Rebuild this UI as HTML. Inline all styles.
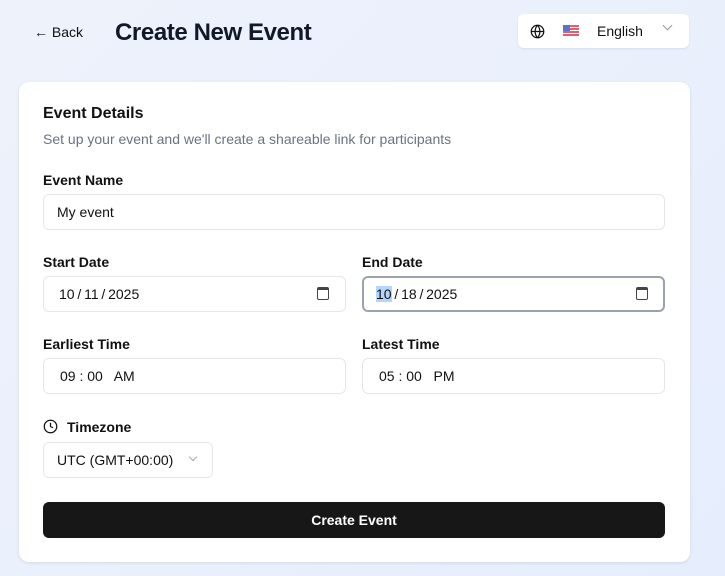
<!DOCTYPE html>
<html><head><style>
*{box-sizing:border-box;margin:0;padding:0}
body{width:725px;height:576px;overflow:hidden;background:linear-gradient(135deg,#eef2fb,#e6edfd);font-family:"Liberation Sans",sans-serif;color:#111;position:relative}
.abs{position:absolute}
.back{left:34px;top:24px;font-size:14px;color:#111}
h1{position:absolute;left:115px;top:19px;font-size:24px;font-weight:bold;color:#111827;letter-spacing:-0.4px}
.lang{left:518px;top:14px;width:171px;height:34px;background:#fff;border-radius:6px;box-shadow:0 1px 2px rgba(0,0,0,.08);font-size:14px}
.card{left:19px;top:82px;width:671px;height:480px;background:#fff;border-radius:10px;box-shadow:0 1px 3px rgba(0,0,0,.1)}
.lbl{font-size:14px;font-weight:bold;color:#111}
.inp{position:absolute;height:36px;border:1px solid #e5e7eb;border-radius:6px;background:#fff;font-size:14px;padding-left:13px;line-height:34px;color:#111}
.cal{position:absolute;right:16px;top:10px;width:12px;height:13px;border:1.5px solid #444;border-radius:2px;border-top-width:3px}
</style></head><body>
<div class="abs back">← Back</div>
<h1>Create New Event</h1>
<div class="abs lang">
<svg class="abs" style="left:12px;top:10px" width="15" height="15" viewBox="0 0 24 24" fill="none" stroke="#111" stroke-width="2"><circle cx="12" cy="12" r="10"/><path d="M2 12h20M12 2a15 15 0 0 1 0 20M12 2a15 15 0 0 0 0 20"/></svg>
<div class="abs" style="left:45px;top:11px;width:16px;height:11px;background:repeating-linear-gradient(#e06070 0 2px,#fff 2px 3px)"><div style="width:7px;height:6px;background:#5b72c8"></div></div>
<div class="abs" style="left:79px;top:9px">English</div>
<div class="abs" style="left:146px;top:8px;width:7px;height:7px;border-right:1.5px solid #999;border-bottom:1.5px solid #999;transform:rotate(45deg)"></div>
</div>
<div class="abs card">
<div class="abs" style="left:24px;top:23px;font-size:16px;font-weight:bold">Event Details</div>
<div class="abs" style="left:24px;top:49px;font-size:14px;color:#6b7280">Set up your event and we'll create a shareable link for participants</div>
<div class="abs lbl" style="left:24px;top:90px">Event Name</div>
<div class="inp" style="left:24px;top:112px;width:622px">My event</div>
<div class="abs lbl" style="left:24px;top:172px">Start Date</div>
<div class="inp" style="left:24px;top:194px;width:303px;padding-left:15px">10&thinsp;/&thinsp;11&thinsp;/&thinsp;2025<div class="cal"></div></div>
<div class="abs lbl" style="left:343px;top:172px">End Date</div>
<div class="inp" style="left:343px;top:194px;width:303px;border:2px solid #9ca3af;padding-left:12px;line-height:32px"><span style="background:#b4d5fe">10</span>&thinsp;/&thinsp;18&thinsp;/&thinsp;2025<div class="cal" style="right:15px;top:9px"></div></div>
<div class="abs lbl" style="left:24px;top:254px">Earliest Time</div>
<div class="inp" style="left:24px;top:276px;width:303px;padding-left:16px">09 : 00 &nbsp; AM</div>
<div class="abs lbl" style="left:343px;top:254px">Latest Time</div>
<div class="inp" style="left:343px;top:276px;width:303px;padding-left:16px">05 : 00 &nbsp; PM</div>
<svg class="abs" style="left:24px;top:337px" width="15" height="15" viewBox="0 0 24 24" fill="none" stroke="#111" stroke-width="2"><circle cx="12" cy="12" r="10"/><path d="M12 6v6l4 2"/></svg>
<div class="abs lbl" style="left:48px;top:337px">Timezone</div>
<div class="inp" style="left:24px;top:360px;width:170px">UTC (GMT+00:00)<div class="abs" style="left:146px;top:11px;width:6px;height:6px;border-right:1.3px solid #aaa;border-bottom:1.3px solid #aaa;transform:rotate(45deg)"></div></div>
<div class="abs" style="left:24px;top:420px;width:622px;height:36px;background:#171717;border-radius:6px;color:#fff;font-size:14px;font-weight:bold;text-align:center;line-height:36px">Create Event</div>
</div>
</body></html>
